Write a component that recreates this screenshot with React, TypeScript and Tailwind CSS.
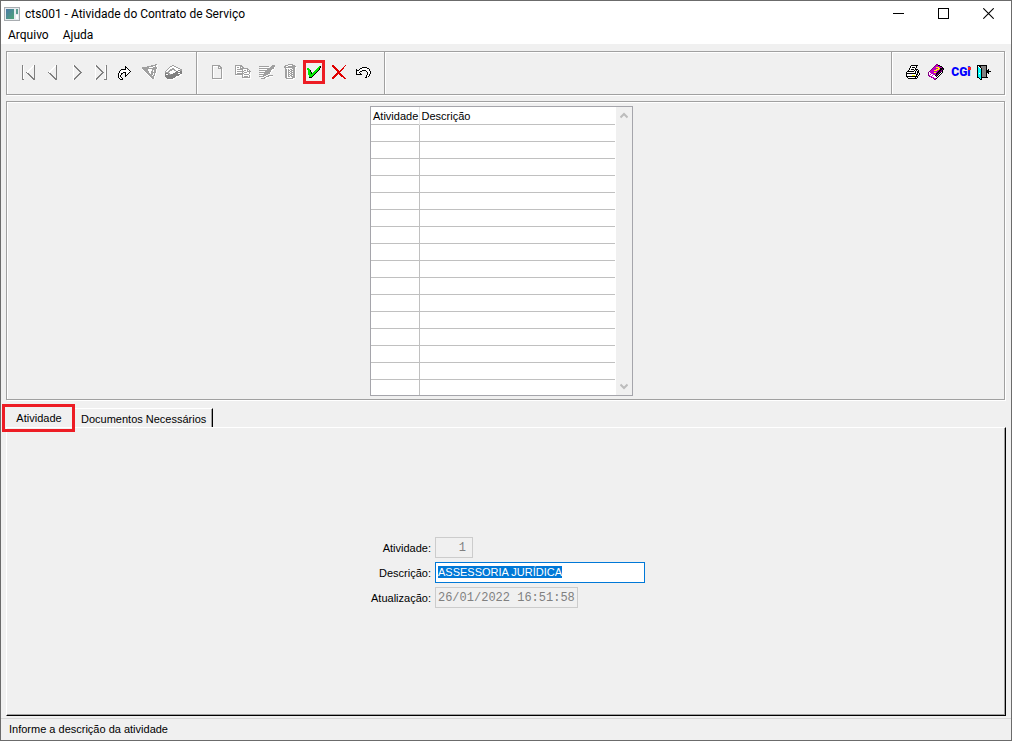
import { useEffect, useRef, type ReactNode } from "react";

type Palette = Record<string, string>;

const COLORS: Palette = {
  k: "#000000",
  w: "#ffffff",
  g: "#a0a0a0",
  d: "#808080",
  l: "#d8d8d8",
  G: "#00e800",
  r: "#e00000",
  m: "#c000c0",
  p: "#800080",
  y: "#ffff00",
  c: "#00ffff",
};

function Glyph({ children }: { children: ReactNode }) {
  return (
    <svg viewBox="0 0 24 24" className="block size-6" shapeRendering="crispEdges" fill="none" aria-hidden="true">
      {children}
    </svg>
  );
}

function Pixels({ x, y, rows }: { x: number; y: number; rows: string[] }) {
  const paths: Record<string, string> = {};
  rows.forEach((row, j) => {
    [...row].forEach((ch, i) => {
      if (ch !== ".") paths[ch] = (paths[ch] ?? "") + `M${x + i} ${y + j}h1v1h-1z`;
    });
  });
  return (
    <Glyph>
      {Object.entries(paths).map(([ch, d]) => (
        <path key={ch} d={d} fill={COLORS[ch]} />
      ))}
    </Glyph>
  );
}

const FIRST = [
  "d..........wd",
  "dw........wwd",
  "dw.......ww.d",
  "dw......ww..d",
  "dw.....ww...d",
  "dw....ww....d",
  "dw...ww.....d",
  "dw..dw......d",
  "dw...dd.....d",
  "dw....dd....d",
  "dw.....dd...d",
  "dw......dd..d",
  "dw.......dd.d",
  "dw........ddd",
  "dd.........dd",
];
const PREV = [
  ".......wd",
  "......wwd",
  ".....ww.d",
  "....ww..d",
  "...ww...d",
  "..ww....d",
  ".ww.....d",
  "dw......d",
  ".dd.....d",
  "..dd....d",
  "...dd...d",
  "....dd..d",
  ".....dd.d",
  "......ddd",
  ".......dd",
];
const NEXT = [
  "wd.......",
  "wdd......",
  "w.dd.....",
  "w..dd....",
  "w...dd...",
  "w....dd..",
  "w.....dd.",
  "w......dd",
  "w.....dd.",
  "w....dd..",
  "w...dd...",
  "w..dd....",
  "w.dd.....",
  "wdd......",
  "wd.......",
];
const LAST = [
  "wd.........d",
  "wdd.......wd",
  "w.dd......wd",
  "w..dd.....wd",
  "w...dd....wd",
  "w....dd...wd",
  "w.....dd..wd",
  "w......dd.wd",
  "w.....dd..wd",
  "w....dd...wd",
  "w...dd....wd",
  "w..dd.....wd",
  "w.dd......wd",
  "wdd.......wd",
  "wd.......ddd",
];
const GOTO = [
  ".......k.....",
  ".......kk....",
  ".......kwk...",
  "...kkkkkwwk..",
  "..kwwwwwwwwk.",
  ".kwwwwwwwwwwk",
  ".kwwwkkkwwwk.",
  "kwwkk..kwwk..",
  "kwwk...kwk...",
  "kwk....kk....",
  "kwk....k.....",
  "kwwk.........",
  ".kwwk........",
  "..kkk........",
];
const FILTER = [
  ".............gg.",
  ".........gggggww",
  ".....ggggggwwgw.",
  "gggggggwwwwggggw",
  "gggggggggggggggw",
  "wgggggwwwwggggw.",
  ".wggggwwwwgwggw.",
  "..wggggwwggwggw.",
  "...wgggwwgggggw.",
  "....wgggwggwgw..",
  ".....wgggggwgw..",
  "......wgggwggw..",
  ".......wggggw...",
  "........wgggw...",
  ".........wggw...",
];
const BOX = [
  ".......gg........",
  ".....ggwwgg......",
  "....gwwwwwwgg....",
  "...gwwwggwwwwgg..",
  "..gwwgggggwwwwwgg",
  ".gwwgggwwggwwddgg",
  "gwwggwwwwwwddwwdd",
  "ggggwwwwwwddddddd",
  "dddggwwwdddddwwdd",
  "dwwdggdddddddddww",
  "ddddddddddddddww.",
  "dddddddddddwww...",
  ".dddddddddww.....",
  "..ddddddww.......",
  "...wwwwww........",
];
const PAGE = [
  "gggggggg...",
  "gwwwwwggg..",
  "gw....gwgg.",
  "gw....gggg.",
  "gw.......gw",
  "gw.......gw",
  "gw.......gw",
  "gw.......gw",
  "gw.......gw",
  "gw.......gw",
  "gw.......gw",
  "gw.......gw",
  "gw.......gw",
  "ggggggggggw",
  ".wwwwwwwwww",
];
const COPY = [
  "ggggggg.........",
  "gwwwwggg........",
  "gwggwgwgg.......",
  "gwwwwgggggggg...",
  "gwggggggwwwwgg..",
  "gwwwwwwgwggwgwg.",
  "gwgggggggwwwgggg",
  "gwwwwwwgwgggwwgw",
  "gwgggggggwwwwwgw",
  "ggggggggwgggggww",
  ".wwwwwwgwwwwwwgw",
  ".......gwggggwgw",
  ".......ggggggggw",
  "........wwwwwwww",
];
const EDIT = [
  ".............ggg",
  "gggggggggg..gggg",
  ".wwwwwwwww.ggggw",
  "gggggggggggggggw",
  ".wwwwwwwgggggww.",
  "ggggggggggggww..",
  ".wwwwwggggggw...",
  "gggggggggggw....",
  ".wwwwggggggw....",
  "gggggggggww.....",
  ".wwwgggwwggggg..",
  "gggggwwgggwwww..",
  ".wwwwggwww......",
  "..ggggww........",
];
const TRASH = [
  "....ggggg....",
  ".gggwwwwggg..",
  "ggwwgggggggg.",
  "gggggggggggww",
  ".gwwwwwwgggw.",
  ".ggwgwggwggw.",
  ".ggwggwggggw.",
  ".ggwgwggwggw.",
  ".ggwggwggggw.",
  ".ggwgwggwggw.",
  ".ggwggwggggw.",
  ".ggwgwggwggw.",
  ".ggwggwggggw.",
  ".ggwwwwwgggw.",
  "..gggggggww..",
  "...wwwwwww...",
];
const CHECK = [
  "............Gk",
  "...........GGk",
  "GG........GGk.",
  "GGG......GGGk.",
  ".GGk....GGGk..",
  ".GGk...GGGk...",
  ".GGGk.GGGk....",
  ".GGGkGGGk.....",
  ".GGGGGGk......",
  "..GGGGk.......",
  "..GGGk........",
  "..kkk.........",
];
const CANCEL = [
  "rr...........r",
  "rrr.........r.",
  ".rrr.......r..",
  "..rrr.....rr..",
  "...rrr...rr...",
  "....rrr.rr....",
  ".....rrrr.....",
  ".....rrr......",
  "....rrrrr.....",
  "...rrr.rrr....",
  "..rrr...rrr...",
  ".rrr.....rrr..",
  "rrr........rr.",
  "rr..........rr",
];
const UNDO = [
  "......kkkkk....",
  "....kkwwwwwkk..",
  "k..kwwwwwwwwwk.",
  "kkkwwwkkkkwwwk.",
  "kwwwkk....kwwwk",
  "kwwk.......kwwk",
  "kwwwk......kwwk",
  "kkkkkk.....kwk.",
  "..........kwwk.",
  "..........kwk..",
  ".........kk....",
];
const PRINTER = [
  ".....kkkkkkk..",
  "....kwwwwwk...",
  "....kwkkkwk...",
  "...kwwwwwk....",
  "...kwkkkwkkk..",
  "..kwwwwwkwkwk.",
  ".kkkkkkkwkwkk.",
  "kwwwwwwwwkwkk.",
  "kkkkkkkkkkwkwk",
  "kwwwwwwwwwkkwk",
  "kwwwwwyyywkwk.",
  "kkkkkkkkkkkk..",
  ".kwwwwwwwkwk..",
  "..kkkkkkkkk...",
];
const BOOK = [
  "........pp......",
  ".......pmmkk....",
  "......pmmmmmkk..",
  ".....pmmyyymmmk.",
  "....pmmmmmyykkkk",
  "...pmmmmyyymkkpk",
  "..pmmmyyymmkkpk.",
  ".pmmmmmmmmkkppk.",
  "pwmmmmyymkkpkwk.",
  "pwwmmmmmkkpkwk..",
  "pwmwwmmmkpkwk...",
  "pmwwmwwkpkwk....",
  ".pmmwwwwkwk.....",
  "...pmmwwwk......",
  ".....pmmk.......",
  "......pp........",
];
const DOOR = [
  "kkkkkkkkkk....",
  "kwkkdddddk....",
  "kcwkdddddk....",
  "kccwkddddk....",
  "kccckddddk.k..",
  "kccckddddkkk..",
  "kccckddddkkkkk",
  "kccckddddkkk..",
  "kcwckddddk.k..",
  "kccckddddk....",
  "kccckddddk....",
  "kccckddddk....",
  "kkcckkkkkkk...",
  "..kck.........",
  "...kk.........",
];

function ToolButton({ label, children, framed }: { label: string; children: ReactNode; framed?: boolean }) {
  return (
    <button type="button" aria-label={label} title={label} className="relative block size-6 shrink-0">
      {children}
      {framed && <span className="absolute inset-x-px inset-y-0 border-3 border-[#ed1c24]" />}
    </button>
  );
}

function Toolbar() {
  return (
    <div
      role="toolbar"
      className="mt-[7px] mr-[6px] ml-[5px] flex h-11 border border-[#a0a0a0] shadow-[inset_1px_1px_0_#fff,1px_1px_0_#fff]"
    >
      <div className="flex border-r border-[#a0a0a0] pt-2 pr-3 pl-[9px]">
        <ToolButton label="Primeiro"><Pixels x={6} y={5} rows={FIRST} /></ToolButton>
        <ToolButton label="Anterior"><Pixels x={8} y={5} rows={PREV} /></ToolButton>
        <ToolButton label="Próximo"><Pixels x={9} y={5} rows={NEXT} /></ToolButton>
        <ToolButton label="Último"><Pixels x={7} y={5} rows={LAST} /></ToolButton>
        <ToolButton label="Ir para"><Pixels x={6} y={6} rows={GOTO} /></ToolButton>
        <ToolButton label="Filtrar"><Pixels x={6} y={4} rows={FILTER} /></ToolButton>
        <ToolButton label="Limpar filtro"><Pixels x={5} y={5} rows={BOX} /></ToolButton>
      </div>
      <div className="flex border-r border-[#a0a0a0] pt-2 pr-[10px] pl-[9px] shadow-[inset_1px_1px_0_#fff]">
        <ToolButton label="Novo"><Pixels x={6} y={5} rows={PAGE} /></ToolButton>
        <ToolButton label="Copiar"><Pixels x={5} y={5} rows={COPY} /></ToolButton>
        <ToolButton label="Editar"><Pixels x={5} y={5} rows={EDIT} /></ToolButton>
        <ToolButton label="Excluir"><Pixels x={6} y={4} rows={TRASH} /></ToolButton>
        <ToolButton label="Confirmar" framed><Pixels x={5} y={6} rows={CHECK} /></ToolButton>
        <ToolButton label="Cancelar"><Pixels x={6} y={5} rows={CANCEL} /></ToolButton>
        <ToolButton label="Desfazer"><Pixels x={6} y={7} rows={UNDO} /></ToolButton>
      </div>
      <div className="flex-1 border-r border-[#a0a0a0] shadow-[inset_1px_1px_0_#fff]" />
      <div className="flex pt-2 pr-[7px] pl-[9px] shadow-[inset_1px_1px_0_#fff]">
        <ToolButton label="Imprimir"><Pixels x={5} y={5} rows={PRINTER} /></ToolButton>
        <ToolButton label="Manual"><Pixels x={3} y={4} rows={BOOK} /></ToolButton>
        <button
          type="button"
          className="relative flex size-6 items-center justify-center font-[Roboto,'Liberation_Sans',sans-serif] text-[12px] font-black text-[#0000ff]"
        >
          CGi
          <span className="absolute top-[7px] right-[2px] size-[3px] bg-[#ff2020]" />
        </button>
        <ToolButton label="Sair"><Pixels x={4} y={5} rows={DOOR} /></ToolButton>
      </div>
    </div>
  );
}

function TitleBar() {
  return (
    <header className="flex h-[25px] items-center bg-white pl-[3px]">
      <svg viewBox="0 0 16 14" className="h-[14px] w-4 shrink-0" shapeRendering="crispEdges" aria-hidden="true">
        <defs>
          <linearGradient id="pane" x1="0" y1="0" x2="1" y2="1">
            <stop offset="0" stopColor="#4a78a8" />
            <stop offset="1" stopColor="#4fa577" />
          </linearGradient>
        </defs>
        <path d="M0 0h16v14H0z" fill="#a8acb0" />
        <path d="M1 1h14v12H1z" fill="#e8ecf0" />
        <path d="M2 2h8v10H2z" fill="url(#pane)" />
        <path d="M12 2h2v5h-2z" fill="#5c9c90" />
        <path d="M12 8h2v4h-2z" fill="#ffffff" />
      </svg>
      <h1 className="flex-1 truncate pl-[5px] font-[Roboto,'Noto_Sans',sans-serif] text-[12px]">
        cts001 - Atividade do Contrato de Serviço
      </h1>
      <button type="button" aria-label="Minimizar" className="flex h-full w-[45px] items-center justify-center">
        <svg viewBox="0 0 11 11" className="size-[11px]" shapeRendering="crispEdges"><path d="M0 5h11v1H0z" /></svg>
      </button>
      <button type="button" aria-label="Maximizar" className="flex h-full w-[45px] items-center justify-center">
        <svg viewBox="0 0 11 11" className="size-[11px]" shapeRendering="crispEdges" fill="none" stroke="#000">
          <path d="M.5.5h10v10H.5z" />
        </svg>
      </button>
      <button type="button" aria-label="Fechar" className="flex h-full w-[45px] items-center justify-center">
        <svg viewBox="0 0 11 11" className="size-[11px]" fill="none" stroke="#000" strokeWidth="1.1">
          <path d="M.3.3l10.4 10.4M10.7.3L.3 10.7" />
        </svg>
      </button>
    </header>
  );
}

const EMPTY_ROWS = Array.from({ length: 16 }, (_, i) => i);

function Records() {
  return (
    <section className="mt-[6px] mr-[6px] ml-[5px] flex justify-center border border-[#a0a0a0] pt-1 pr-2 pb-[3px] shadow-[inset_1px_1px_0_#fff,1px_1px_0_#fff]">
      <div className="flex h-[290px] w-[263px] border border-[#a5a5ab] bg-white">
        <div className="flex-1 overflow-hidden">
          <table className="w-[244px] table-fixed border-collapse">
            <thead>
              <tr className="h-[17px]">
                <th scope="col" className="h-[17px] w-[48px] p-0 pt-px pl-[2px] text-left leading-4 font-normal">Atividade</th>
                <th scope="col" className="h-[17px] border-l border-[#e4e4e4] p-0 pt-px pl-[2px] text-left leading-4 font-normal">Descrição</th>
              </tr>
            </thead>
            <tbody>
              {EMPTY_ROWS.map((row) => (
                <tr key={row} className="h-[17px]">
                  <td className="border-t border-r border-[#c0c0c0] p-0" />
                  <td className="border-t border-[#c0c0c0] p-0" />
                </tr>
              ))}
            </tbody>
          </table>
        </div>
        <div className="flex w-4 flex-col items-center justify-between bg-[#f0f0f0] py-[5px]">
          <svg viewBox="0 0 8 7" className="h-[7px] w-2" fill="none" stroke="#bcbcbc" strokeWidth="2"><path d="M.5 5.5L4 2l3.500 3.500" /></svg>
          <svg viewBox="0 0 8 7" className="h-[7px] w-2" fill="none" stroke="#bcbcbc" strokeWidth="2"><path d="M.5 1.500L4 5l3.500-3.500" /></svg>
        </div>
      </div>
    </section>
  );
}

function Tabs() {
  return (
    <div role="tablist" className="mt-2 ml-[5px] flex h-[19px] items-stretch">
      <button type="button" role="tab" aria-selected="true" className="relative w-[69px] pr-[3px] leading-[18px]">
        Atividade
        <span className="absolute -top-1 right-0 -bottom-[5px] -left-1 border-3 border-[#ed1c24]" />
      </button>
      <button
        type="button"
        role="tab"
        aria-selected="false"
        className="border-t border-r border-t-white border-r-black pr-[6px] pl-[6px] leading-5 shadow-[inset_-1px_0_0_#a0a0a0]"
      >
        Documentos Necessários
      </button>
    </div>
  );
}

function Form() {
  const description = useRef<HTMLInputElement>(null);

  useEffect(() => {
    description.current?.focus();
    description.current?.select();
  }, []);

  return (
    <form className="grid grid-cols-[auto_auto] items-center gap-x-1 gap-y-1" onSubmit={(e) => e.preventDefault()}>
      <label htmlFor="atividade" className="pt-0.5 text-right">Atividade:</label>
      <input
        id="atividade"
        readOnly
        value="1"
        className="h-[21px] w-[38px] border border-[#cccccc] bg-[#f0f0f0] pr-[6px] text-right font-['Liberation_Mono',monospace] text-[12px] text-[#808080] outline-none"
      />
      <label htmlFor="descricao" className="pt-0.5 text-right">Descrição:</label>
      <input
        id="descricao"
        ref={description}
        defaultValue="ASSESSORIA JURÍDICA"
        className="h-[21px] w-[210px] border border-[#0078d7] bg-white pb-[2px] pl-[2px] outline-none selection:bg-[#0078d7] selection:text-white"
      />
      <label htmlFor="atualizacao" className="pt-0.5 text-right">Atualização:</label>
      <input
        id="atualizacao"
        readOnly
        value="26/01/2022 16:51:58"
        className="h-[21px] w-[143px] border border-[#cccccc] bg-[#f0f0f0] pl-[2px] font-['Liberation_Mono',monospace] text-[12px] text-[#808080] outline-none"
      />
    </form>
  );
}

export default function App() {
  return (
    <div className="flex min-h-screen flex-col border border-[#6b6b6b] bg-[#f0f0f0] font-['Liberation_Sans',Arial,sans-serif] text-[11px] text-black">
      <TitleBar />
      <nav className="flex h-[18px] items-center gap-[14px] bg-white pl-[7px] font-[Roboto,'Noto_Sans',sans-serif] text-[12px]">
        <button type="button">Arquivo</button>
        <button type="button">Ajuda</button>
      </nav>
      <Toolbar />
      <Records />
      <Tabs />
      <main
        role="tabpanel"
        className="mr-[5px] mb-[2px] ml-[5px] flex flex-1 items-center justify-center border border-t-white border-r-black border-b-black border-l-white pt-[2px] pl-1 shadow-[inset_-1px_-1px_0_#a0a0a0]"
      >
        <Form />
      </main>
      <footer className="h-[22px] border-t border-[#d7d7d7] pl-2 leading-5">Informe a descrição da atividade</footer>
    </div>
  );
}
